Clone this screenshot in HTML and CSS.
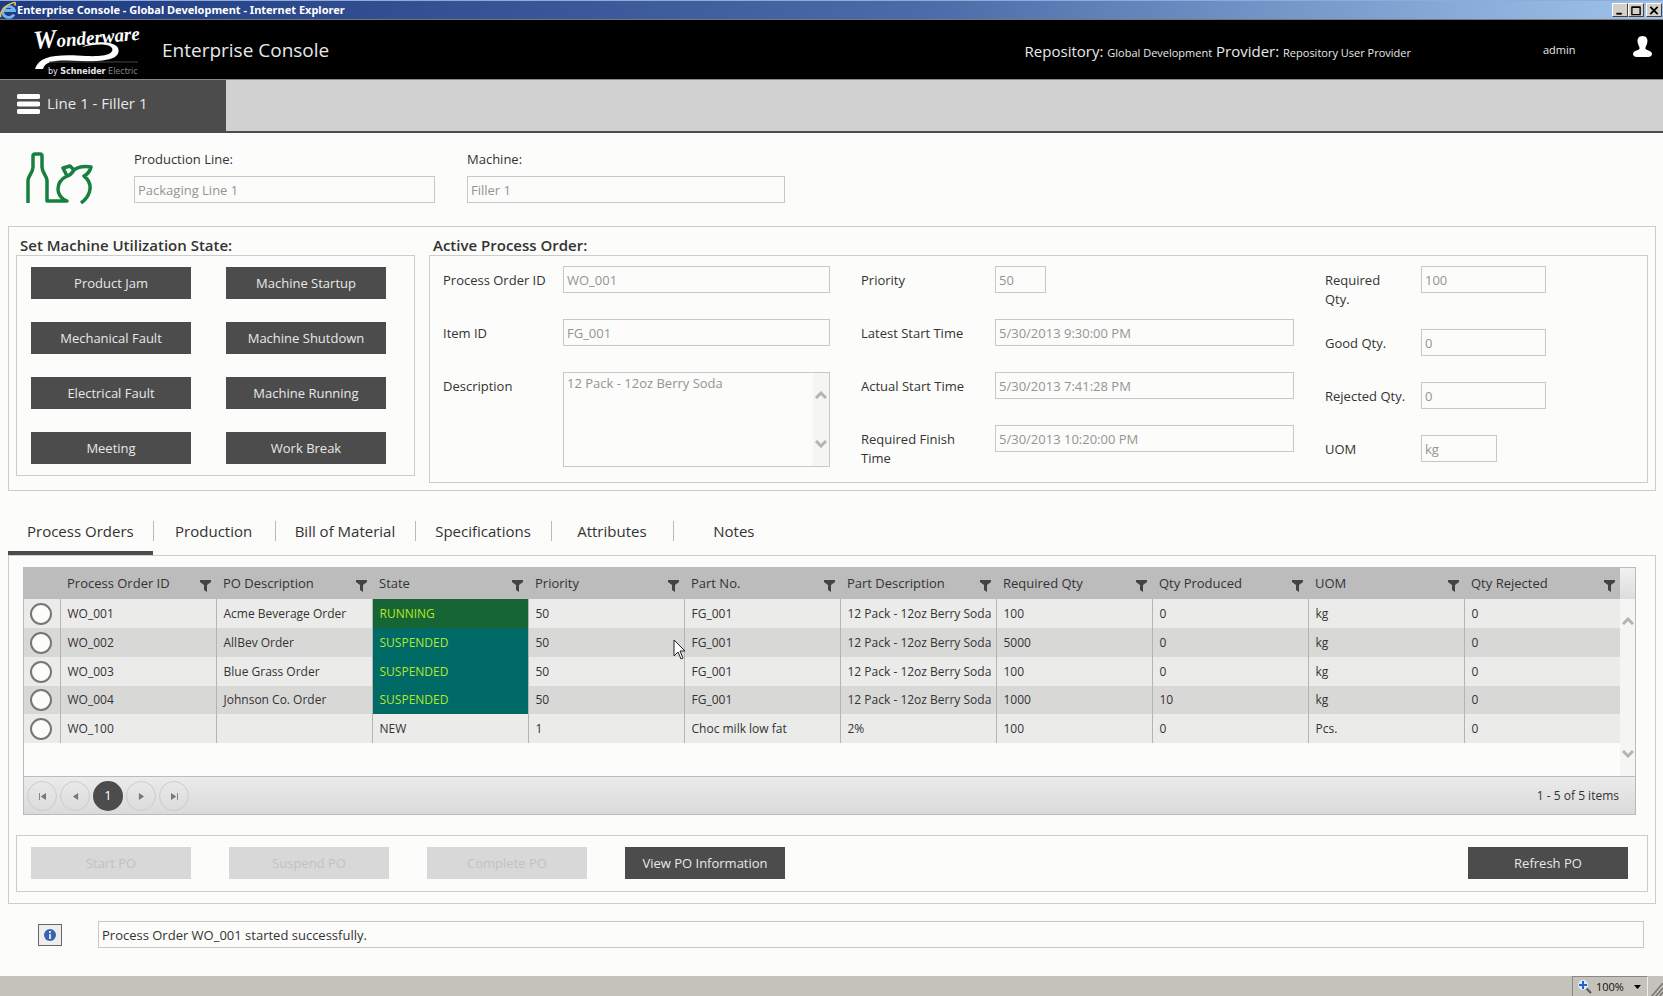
FILE: index.html
```html
<!DOCTYPE html>
<html lang="en">
<head>
  <meta charset="UTF-8">
  <meta name="viewport" content="width=device-width, initial-scale=1.0">
  <title>Enterprise Console - Global Development</title>
  <link rel="stylesheet" href="styles.css">
</head>
<body>
  <!-- shared icons -->
  <svg class="sprite" aria-hidden="true">
    <symbol id="i-filter" viewBox="0 0 11 12"><path d="M0 0h11v2L7 5v7L4 10V5L0 2z"/></symbol>
    <symbol id="i-up" viewBox="0 0 12 8"><path d="M1 7l5-5 5 5" fill="none" stroke="#b4b4b4" stroke-width="3"/></symbol>
    <symbol id="i-down" viewBox="0 0 12 8"><path d="M1 1l5 5 5-5" fill="none" stroke="#b4b4b4" stroke-width="3"/></symbol>
  </svg>

  <div class="titlebar">
    <svg class="ie" viewBox="0 0 16 18">
      <path d="M14 13.500A6 5.500 0 1 1 14.500 9.500H4" fill="none" stroke="#6fb4ee" stroke-width="2.800"/>
      <path d="M1 16C-1 13 4 4 14 1.500c2-.3 1.500 2 .5 3" fill="none" stroke="#e8c34a" stroke-width="1.600"/>
    </svg>
    <span>Enterprise Console - Global Development - Internet Explorer</span>
    <div class="win-buttons">
      <button aria-label="Minimize"><svg viewBox="0 0 12 12"><path d="M2 9.500h6" stroke="#000" stroke-width="2"/></svg></button>
      <button aria-label="Maximize"><svg viewBox="0 0 12 12"><path d="M1.500 2.500h9v8h-9zM1.500 2h9" fill="none" stroke="#000" stroke-width="1.500"/></svg></button>
      <button class="close" aria-label="Close"><svg viewBox="0 0 12 12"><path d="M2 2l8 8M10 2l-8 8" stroke="#000" stroke-width="2"/></svg></button>
    </div>
  </div>

  <header class="header">
    <div class="logo">
      <svg viewBox="0 0 110 56">
        <text class="wordmark" x="1" y="27" transform="rotate(-5 1 27)"><tspan class="cap">W</tspan>onderware</text>
        <path d="M2 47C6 34 23 32 53 34c22 1 28-3 26-8-3-5-18-4-30-1 10-6 32-7 36 1 4 11-13 14-37 13C27 38 12 38 10 47z" fill="#fff"/>
        <path d="M16 40h89" stroke="#444" stroke-width="1"/>
      </svg>
      <div class="logo-sub">by <b>Schneider</b> <span>Electric</span></div>
    </div>
    <h1>Enterprise Console</h1>
    <div class="repo">Repository: <small>Global Development</small> Provider: <small>Repository User Provider</small></div>
    <div class="user">admin</div>
    <svg class="person" viewBox="0 0 20 22"><path d="M10 0c4 0 6 3 5 7-.5 3-2 4-2 6 1 2 7 2 7 6 0 2-2 3-4 3H4c-2 0-4-1-4-3 0-4 6-4 7-6 0-2-1.500-3-2-6-1-4 1-7 5-7z" fill="#fff"/></svg>
  </header>

  <nav class="navbar">
    <button class="nav-tab">
      <svg viewBox="0 0 23 20"><path d="M2 2.500h19M2 10h19M2 17.500h19" stroke="#fff" stroke-width="5" stroke-linecap="round"/></svg>
      Line 1 - Filler 1
    </button>
  </nav>

  <main>
    <section class="machine">
      <svg class="bottle" viewBox="0 0 67 52">
        <g fill="none" stroke="#15803f" stroke-width="3.500" stroke-linejoin="round">
          <path d="M2 51V28c1-5 5-8 5-13V4q0-2 2-2h5q2 0 2 2v11c0 5 4 8 5 13v21h20C29 44 29 30 41 24l-4-8 7-2 4 4c5-4 10-4 17-3-1 4-3 7-7 9 9 7 8 19-3 27"/>
          <path d="M41 24c4-1 5-3 7-6"/>
        </g>
      </svg>
      <div class="field line">
        <label for="line">Production Line:</label>
        <input id="line" type="text" value="Packaging Line 1" disabled>
      </div>
      <div class="field mach">
        <label for="machine">Machine:</label>
        <input id="machine" type="text" value="Filler 1" disabled>
      </div>
    </section>

    <section class="panel overview">
      <div class="states">
        <h2>Set Machine Utilization State:</h2>
        <div class="box state-grid">
          <button class="btn">Product Jam</button>
          <button class="btn">Machine Startup</button>
          <button class="btn">Mechanical Fault</button>
          <button class="btn">Machine Shutdown</button>
          <button class="btn">Electrical Fault</button>
          <button class="btn">Machine Running</button>
          <button class="btn">Meeting</button>
          <button class="btn">Work Break</button>
        </div>
      </div>
      <div class="active-order">
        <h2>Active Process Order:</h2>
        <div class="box order">
          <div class="col col-a">
            <label for="po">Process Order ID</label><input id="po" type="text" value="WO_001" disabled>
            <label for="item">Item ID</label><input id="item" type="text" value="FG_001" disabled>
            <label for="desc">Description</label>
            <div class="memo">
              <textarea id="desc" disabled>12 Pack - 12oz Berry Soda</textarea>
              <div class="scroll"><svg><use href="#i-up"/></svg><svg><use href="#i-down"/></svg></div>
            </div>
          </div>
          <div class="col col-b">
            <label for="prio">Priority</label><input id="prio" class="tiny" type="text" value="50" disabled>
            <label for="latest">Latest Start Time</label><input id="latest" type="text" value="5/30/2013 9:30:00 PM" disabled>
            <label for="actual">Actual Start Time</label><input id="actual" type="text" value="5/30/2013 7:41:28 PM" disabled>
            <label for="finish">Required Finish Time</label><input id="finish" type="text" value="5/30/2013 10:20:00 PM" disabled>
          </div>
          <div class="col col-c">
            <label for="req">Required Qty.</label><input id="req" type="text" value="100" disabled>
            <label for="good">Good Qty.</label><input id="good" type="text" value="0" disabled>
            <label for="rej">Rejected Qty.</label><input id="rej" type="text" value="0" disabled>
            <label for="uom">UOM</label><input id="uom" class="short" type="text" value="kg" disabled>
          </div>
        </div>
      </div>
    </section>

    <div class="tabs" role="tablist">
      <button role="tab" class="tab active" aria-selected="true">Process Orders</button>
      <button role="tab" class="tab">Production</button>
      <button role="tab" class="tab">Bill of Material</button>
      <button role="tab" class="tab">Specifications</button>
      <button role="tab" class="tab">Attributes</button>
      <button role="tab" class="tab">Notes</button>
    </div>

    <section class="panel orders">
      <div class="grid">
        <div class="grid-body">
          <table>
            <thead>
              <tr>
                <th class="pick"></th>
                <th>Process Order ID<svg><use href="#i-filter"/></svg></th>
                <th>PO Description<svg><use href="#i-filter"/></svg></th>
                <th>State<svg><use href="#i-filter"/></svg></th>
                <th>Priority<svg><use href="#i-filter"/></svg></th>
                <th>Part No.<svg><use href="#i-filter"/></svg></th>
                <th>Part Description<svg><use href="#i-filter"/></svg></th>
                <th>Required Qty<svg><use href="#i-filter"/></svg></th>
                <th>Qty Produced<svg><use href="#i-filter"/></svg></th>
                <th>UOM<svg><use href="#i-filter"/></svg></th>
                <th>Qty Rejected<svg><use href="#i-filter"/></svg></th>
              </tr>
            </thead>
            <tbody>
              <tr><td class="pick"><input type="radio" name="order" aria-label="WO_001"></td><td>WO_001</td><td>Acme Beverage Order</td><td class="running">RUNNING</td><td>50</td><td>FG_001</td><td>12 Pack - 12oz Berry Soda</td><td>100</td><td>0</td><td>kg</td><td>0</td></tr>
              <tr><td class="pick"><input type="radio" name="order" aria-label="WO_002"></td><td>WO_002</td><td>AllBev Order</td><td class="suspended">SUSPENDED</td><td>50</td><td>FG_001</td><td>12 Pack - 12oz Berry Soda</td><td>5000</td><td>0</td><td>kg</td><td>0</td></tr>
              <tr><td class="pick"><input type="radio" name="order" aria-label="WO_003"></td><td>WO_003</td><td>Blue Grass Order</td><td class="suspended">SUSPENDED</td><td>50</td><td>FG_001</td><td>12 Pack - 12oz Berry Soda</td><td>100</td><td>0</td><td>kg</td><td>0</td></tr>
              <tr><td class="pick"><input type="radio" name="order" aria-label="WO_004"></td><td>WO_004</td><td>Johnson Co. Order</td><td class="suspended">SUSPENDED</td><td>50</td><td>FG_001</td><td>12 Pack - 12oz Berry Soda</td><td>1000</td><td>10</td><td>kg</td><td>0</td></tr>
              <tr><td class="pick"><input type="radio" name="order" aria-label="WO_100"></td><td>WO_100</td><td></td><td>NEW</td><td>1</td><td>Choc milk low fat</td><td>2%</td><td>100</td><td>0</td><td>Pcs.</td><td>0</td></tr>
            </tbody>
          </table>
          <div class="grid-scroll">
            <div class="scroll-head"></div>
            <div class="scroll"><svg><use href="#i-up"/></svg><svg><use href="#i-down"/></svg></div>
          </div>
        </div>
        <div class="pager">
          <button aria-label="First page"><svg viewBox="0 0 8 8"><path d="M0 0h1v8H0zM8 0v8L2 4z"/></svg></button>
          <button aria-label="Previous page"><svg viewBox="0 0 8 8"><path d="M7 0v8L1 4z"/></svg></button>
          <button class="current">1</button>
          <button aria-label="Next page"><svg viewBox="0 0 8 8"><path d="M1 0v8l6-4z"/></svg></button>
          <button aria-label="Last page"><svg viewBox="0 0 8 8"><path d="M0 0v8l6-4zM7 0h1v8H7z"/></svg></button>
          <span class="count">1 - 5 of 5 items</span>
        </div>
        <svg class="cursor" viewBox="0 0 12 21"><path d="M1 1v16l4-4 3 7 2-1-3-7h5z" fill="#fff" stroke="#222" stroke-width="1"/></svg>
      </div>

      <div class="box actions">
        <button class="btn" disabled>Start PO</button>
        <button class="btn" disabled>Suspend PO</button>
        <button class="btn" disabled>Complete PO</button>
        <button class="btn">View PO Information</button>
        <button class="btn refresh">Refresh PO</button>
      </div>
    </section>

    <section class="message">
      <button class="info" aria-label="Information"><svg viewBox="0 0 12 12"><circle cx="6" cy="6" r="6" fill="#3a62b0"/><path d="M6 2v2M6 5v5" stroke="#cfe0ff" stroke-width="2"/></svg></button>
      <input type="text" aria-label="Message" value="Process Order WO_001 started successfully." readonly>
    </section>
  </main>

  <footer class="statusbar">
    <button class="zoom">
      <svg viewBox="0 0 14 14"><path d="M8 8l5 5" stroke="#555" stroke-width="2"/><circle cx="5" cy="5" r="5" fill="#dce9fb"/><path d="M5 1v8M1 5h8" stroke="#2a5fc4" stroke-width="2"/></svg>
      100%
      <svg class="caret" viewBox="0 0 7 4"><path d="M0 0h7L3.500 4z"/></svg>
    </button>
    <svg class="grip" viewBox="0 0 12 14"><path d="M0 14L12 0M4 14l8-9M8 14l4-5" stroke="#777" stroke-width="1.500"/></svg>
  </footer>
</body>
</html>
```
FILE: styles.css
```css
* { box-sizing: border-box; }
body { margin: 0; min-height: 100vh; display: flex; flex-direction: column; background: #fcfcfa; color: #333; font: 13px/19px "Open Sans", "Noto Sans", sans-serif; }
button, input, textarea { font: inherit; color: inherit; margin: 0; }
button { padding: 0; border: 0; background: none; }
h1, h2 { margin: 0; }
.sprite { display: none; }

/* window title */
.titlebar { display: flex; align-items: center; height: 20px; border-top: 1px solid #8fabd8; border-bottom: 1px solid #777; background: linear-gradient(90deg, #1f3a80, #4a6aa8 55%, #9fc3ea); color: #fff; font: bold 11px/18px "Noto Sans", sans-serif; }
.ie { width: 16px; height: 18px; margin-right: 1px; }
.win-buttons { display: flex; margin: 0 1px 0 auto; }
.win-buttons button { width: 16px; height: 14px; border: 1px solid; border-color: #fff #444 #444 #fff; background: #d4d0c8; }
.win-buttons .close { margin-left: 2px; }
.win-buttons svg { display: block; width: 12px; height: 11px; margin: auto; }

.header { display: flex; align-items: center; height: 59px; background: #000; color: #e8e8e8; }
.logo { width: 162px; height: 56px; padding-left: 33px; position: relative; }
.logo svg { display: block; width: 110px; height: 56px; overflow: visible; }
.wordmark { fill: #fff; font: italic bold 19px "Liberation Serif", serif; }
.wordmark .cap { font-size: 26px; }
.logo-sub { position: absolute; left: 48px; top: 44px; font: 8px/12px "DejaVu Sans", sans-serif; }
.logo-sub span { color: #888; }
.header h1 { font-size: 19px; font-weight: 400; line-height: 24px; }
.repo { margin: 4px 0 0 auto; font-size: 15px; }
.repo small, .user { font-size: 11px; }
.user { width: 166px; padding-left: 132px; }
.person { width: 19px; height: 21px; margin: 0 11px 6px 56px; }

.navbar { height: 54px; border-bottom: 2px solid #4c4c4c; border-top: 1px solid #888; background: #d1d1d1; }
.nav-tab { display: flex; align-items: center; gap: 7px; width: 226px; height: 51px; padding: 0 0 4px 17px; background: #4c4c4c; color: #e8e8e8; font-size: 15px; }
.nav-tab svg { width: 23px; height: 20px; }

main { flex: 1; padding: 0 7px 0 8px; }
input[type="text"], textarea { height: 27px; width: 100%; padding: 1px 3px 0; border: 1px solid #c8c8c8; border-radius: 0; background: #fcfcfa; }
input:disabled, textarea:disabled { color: #949494; }

.machine { display: flex; padding: 17px 0 22px 17px; }
.bottle { width: 67px; height: 52px; margin: 2px 41px 0 1px; }
.field label { display: block; height: 26px; }
.field.line { width: 301px; margin-right: 32px; }
.field.mach { width: 318px; }

.panel, .box { border: 1px solid #ccc; }
.overview { display: flex; gap: 14px; padding: 9px 7px 7px; }
.overview h2 { padding-left: 4px; font-size: 15px; line-height: 19px; font-weight: 600; }
.active-order { flex: 1; }
.state-grid { display: grid; grid-template-columns: 160px 160px; gap: 23px 35px; width: 399px; padding: 11px 14px; }
.btn { width: 160px; height: 32px; background: #4c4c4c; color: #e8e8e8; }
.btn:disabled { background: #d8d8d8; color: #c2c2c2; }

.order { display: flex; height: 228px; padding: 10px 13px; }
.col { display: grid; grid-auto-rows: minmax(27px, auto); row-gap: 26px; align-content: start; align-items: start; }
.col label { padding-top: 5px; }
.col-a { grid-template-columns: 120px 267px; margin-right: 31px; }
.col-b { grid-template-columns: 134px 299px; margin-right: 31px; }
.col-b label { width: 110px; margin-bottom: -16px; }
.col-c { grid-template-columns: 96px 125px; }
.col-c label[for="req"] { width: 70px; margin-bottom: -6px; }
.col .tiny { width: 51px; }
.col .short { width: 76px; }
.memo { display: flex; height: 95px; border: 1px solid #c8c8c8; }
.memo textarea { flex: 1; height: 93px; padding: 1px 3px; border: 0; resize: none; }
.scroll { display: flex; flex-direction: column; justify-content: space-between; align-items: center; width: 16px; padding: 18px 0; background: #f5f5f4; }
.scroll svg { width: 12px; height: 8px; }

.tabs { display: flex; height: 64px; padding-top: 20px; }
.tab { position: relative; min-width: 122px; height: 44px; padding: 0 20px 4px; font-size: 15px; }
.tab + .tab::before { content: ""; position: absolute; left: 0; top: 10px; height: 20px; border-left: 1px solid #bbb; }
.tab.active { border-bottom: 4px solid #4c4c4c; padding: 0 19px; }

.orders { padding: 11px 7px; }
.grid { position: relative; margin: 0 12px 20px 7px; border: 1px solid #bbb; }
.grid-body { display: flex; height: 208px; }
table { flex: 1; width: 100%; align-self: flex-start; table-layout: fixed; border-collapse: collapse; }
th, td { padding: 0 0 0 7px; text-align: left; white-space: nowrap; }
th { height: 31px; position: relative; background: #bcbcbc; font-weight: 400; }
th svg { position: absolute; right: 5px; top: 12px; width: 11px; height: 12px; fill: #444; }
td { height: 29px; border-left: 1px solid #b4b4b4; background: #ebebea; font-size: 12px; line-height: 16px; }
tr:nth-child(even) td { background: #d8d8d7; }
tr:nth-child(4) td { height: 28px; }
tbody tr .pick { border: 0; }
.pick { width: 36px; padding: 0 0 0 6px; }
.pick input { display: block; appearance: none; width: 22px; height: 22px; margin: 0; border: 2px solid #777; border-radius: 50%; background: #fcfcfa; }
tbody tr .running { background: #166534; color: #b5e628; }
tbody tr .suspended, tbody tr:nth-child(even) .suspended { background: #006a66; color: #b5e628; }
.grid-scroll { display: flex; flex-direction: column; width: 15px; }
.scroll-head { height: 31px; background: linear-gradient(#f0f0f0, #ddd); }
.grid-scroll .scroll { flex: 1; width: 15px; }

.pager { display: flex; align-items: center; gap: 3px; height: 38px; padding: 0 16px 0 3px; border-top: 1px solid #bbb; background: linear-gradient(#ebebeb, #dadada); font-size: 12px; }
.pager button { width: 30px; height: 30px; border: 1px solid #ccc; border-radius: 50%; }
.pager button svg { width: 7px; height: 7px; fill: #777; }
.pager .current { border: 0; background: #4c4c4c; color: #fff; font-size: 13px; }
.count { margin-left: auto; }
.cursor { position: absolute; left: 649px; top: 71px; width: 12px; height: 21px; }

.actions { display: flex; gap: 38px; padding: 11px 19px 12px 14px; }
.refresh { margin-left: auto; }

.message { display: flex; align-items: center; gap: 36px; padding: 17px 12px 28px 30px; }
.info { display: flex; align-items: center; justify-content: center; width: 24px; height: 22px; border: 1px solid #666; background: #eee; }
.info svg { width: 12px; height: 12px; }
.message input { flex: 1; }

.statusbar { display: flex; justify-content: flex-end; align-items: stretch; height: 21px; background: #c4c2bb; font-size: 11px; }
.zoom { display: flex; align-items: center; gap: 4px; width: 76px; padding-left: 5px; border: 1px solid; border-color: #888 #eee #eee #888; color: #111; }
.zoom svg { width: 14px; height: 14px; }
.zoom .caret { width: 7px; height: 4px; margin-left: 6px; }
.grip { align-self: flex-end; width: 12px; height: 14px; margin-left: 3px; }
```
